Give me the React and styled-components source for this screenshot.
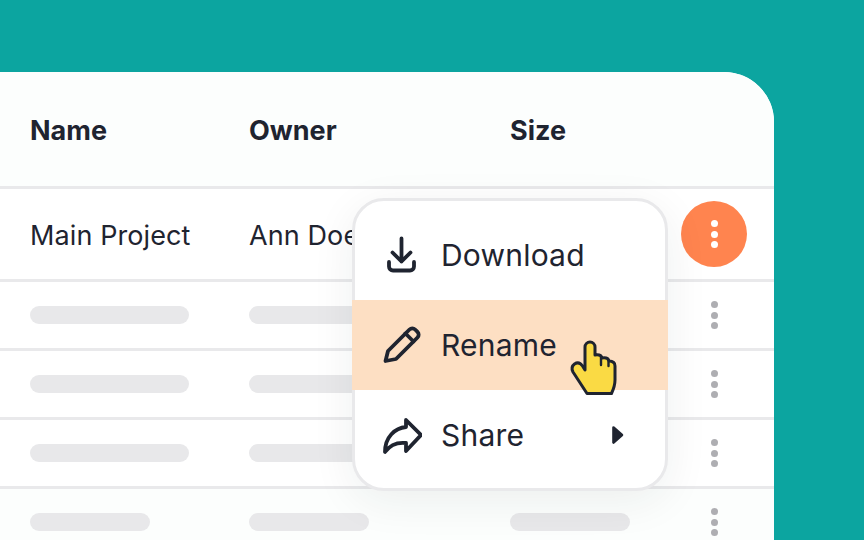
import React from "react";
import styled, { createGlobalStyle } from "styled-components";

const Global = createGlobalStyle`
  html, body { margin: 0; padding: 0; width: 864px; height: 540px; overflow: hidden; background: #0ca5a0; }
  #root { width: 864px; height: 540px; overflow: hidden; }
`;

const Stage = styled.div`
  width: 864px;
  height: 540px;
  padding-top: 72px;
  box-sizing: border-box;
  overflow: hidden;
  font-family: Inter, "Liberation Sans", sans-serif;
  color: #1f2430;
`;

const Card = styled.div`
  position: relative;
  width: 774px;
  height: 520px;
  background: #fff;
  border-top-right-radius: 50px;
  overflow: hidden;
`;

const Row = styled.div`
  display: grid;
  grid-template-columns: 219px 261px 171px 1fr;
  align-items: center;
  box-sizing: border-box;
  height: ${(p) => p.$h}px;
  padding-left: 30px;
  border-bottom: 3px solid #e9e9eb;
  background: ${(p) => p.$bg || "#fff"};
`;

const HeadCell = styled.div`
  padding-top: 3px;
  font-size: 27px;
  font-weight: 700;
  line-height: 32px;
`;

const Cell = styled.div`
  padding-top: 3px;
  font-size: 27px;
  font-weight: 400;
  line-height: 32px;
  letter-spacing: 0.1px;
  white-space: nowrap;
`;

const Bar = styled.div`
  width: ${(p) => p.$w}px;
  height: 18px;
  border-radius: 9px;
  background: #e8e8ea;
`;

const Dots = styled.div`
  justify-self: end;
  width: 66px;
  height: 66px;
  margin-right: 27px;
  border-radius: 50%;
  display: flex;
  flex-direction: column;
  align-items: center;
  justify-content: center;
  gap: 3.5px;
  background: ${(p) => (p.$active ? "#ff844f" : "transparent")};
`;

const Dot = styled.span`
  width: 7px;
  height: 7px;
  border-radius: 50%;
  background: ${(p) => (p.$active ? "#fff" : "#aeaeb2")};
`;

const Menu = styled.div`
  position: absolute;
  left: 352px;
  top: 126px;
  width: 316px;
  height: 293px;
  box-sizing: border-box;
  padding: 9px 0;
  background: #fff;
  border: 3px solid #e9e9eb;
  border-radius: 32px;
  box-shadow: 0 10px 44px rgba(30, 36, 48, 0.07);
`;

const Item = styled.div`
  display: flex;
  align-items: center;
  position: relative;
  height: 90px;
  margin: 0 -3px;
  padding-left: 30px;
  background: ${(p) => (p.$hover ? "#fddfc3" : "transparent")};
  font-size: 30px;
  line-height: 36px;
  letter-spacing: 0.2px;
`;

const IconSlot = styled.span`
  display: flex;
  width: 40px;
  height: 40px;
  margin-right: 19px;
  svg { display: block; }
`;

const Caret = styled.svg`
  position: absolute;
  left: 258px;
  top: 34px;
`;

const Pointer = styled.svg`
  position: absolute;
  left: 560px;
  top: 258px;
`;

const stroke = {
  fill: "none",
  stroke: "#1f2430",
  strokeWidth: 3.8,
  strokeLinecap: "round",
  strokeLinejoin: "round",
};

const DownloadIcon = () => (
  <svg width="40" height="40" viewBox="0 0 40 40" {...stroke}>
    <path d="M19.500 3.500v23M10.500 17.500l9 9 9-9" />
    <path d="M7 27v4.500a4 4 0 0 0 4 4h17a4 4 0 0 0 4-4V27" />
  </svg>
);

const PencilIcon = () => (
  <svg width="40" height="40" viewBox="0 0 40 40" {...stroke}>
    <path d="M3.500 36l2.500-10L27.500 4.500a4 4 0 0 1 5.600 0l2.400 2.400a4 4 0 0 1 0 5.600L14 34z" />
    <path d="M23.500 8.500l8 8" />
  </svg>
);

const ShareIcon = () => (
  <svg width="40" height="40" viewBox="0 0 40 40" {...stroke}>
    <path d="M3 37C3 22 13 13 24 12V5l15 15-15 16v-8C15 27 8 30 3 37z" />
  </svg>
);

const Three = ({ active }) => (
  <Dots $active={active}>
    <Dot $active={active} />
    <Dot $active={active} />
    <Dot $active={active} />
  </Dots>
);

const skeletons = [
  { a: 159, b: 120, c: 120, bg: "#fff", h: 69 },
  { a: 159, b: 120, c: 120, bg: "#fff", h: 69 },
  { a: 159, b: 120, c: 120, bg: "#fff", h: 69 },
  { a: 120, b: 120, c: 120, bg: "#fcfefd", h: 69 },
];

export default function App() {
  return (
    <Stage>
      <Global />
      <Card>
        <Row $h={117} $bg="#fcfefd">
          <HeadCell>Name</HeadCell>
          <HeadCell>Owner</HeadCell>
          <HeadCell>Size</HeadCell>
        </Row>
        <Row $h={93}>
          <Cell>Main Project</Cell>
          <Cell>Ann Doe</Cell>
          <span />
          <Three active />
        </Row>
        {skeletons.map((s, i) => (
          <Row key={i} $h={s.h} $bg={s.bg}>
            <Bar $w={s.a} />
            <Bar $w={s.b} />
            <Bar $w={s.c} />
            <Three />
          </Row>
        ))}
        <Menu>
          <Item>
            <IconSlot><DownloadIcon /></IconSlot>
            Download
          </Item>
          <Item $hover>
            <IconSlot><PencilIcon /></IconSlot>
            Rename
          </Item>
          <Item>
            <IconSlot><ShareIcon /></IconSlot>
            Share
            <Caret width="16" height="22" viewBox="0 0 16 22">
              <path d="M3.500 3.500L12 11 3.500 18.500z" fill="#1f2430" stroke="#1f2430" strokeWidth="2.600" strokeLinejoin="round" />
            </Caret>
          </Item>
        </Menu>
        <Pointer width="70" height="75" viewBox="0 0 70 75">
          <path
            d="M25 17a5 5 0 0 1 10 0V25q6-1 7 3 6-1 7 3 6 0 6 5v14q0 6-3.500 13.500H27L13 42q-2.500-5 1.500-8 4.500-3 8 2l2.500 4z"
            fill="#fada44"
            stroke="#1f2430"
            strokeWidth="3"
            strokeLinejoin="round"
          />
          <path d="M41 27v8M48.500 30v6" fill="none" stroke="#1f2430" strokeWidth="2.400" strokeLinecap="round" />
        </Pointer>
      </Card>
    </Stage>
  );
}
